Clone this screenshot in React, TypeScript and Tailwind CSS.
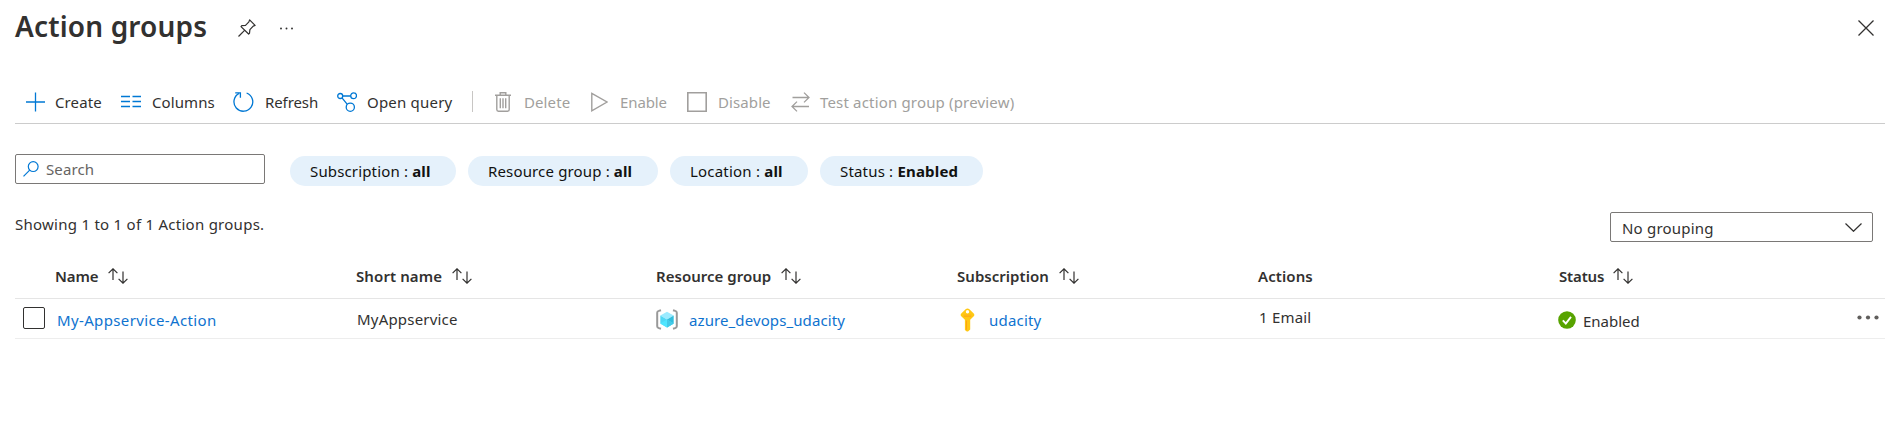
import type { ReactNode } from 'react';

function PinIcon() {
  return (
    <svg width="18" height="18" viewBox="0 0 18 18" fill="none" stroke="#323130" strokeWidth="1.2" strokeLinejoin="round">
      <path d="M11.6 0.9 L17.1 6.4 L15.2 7.1 L11.9 10.6 L11.5 14.2 L10.6 15 L3 7.6 L3.8 6.7 L7.5 6.4 L10.9 2.9 Z" />
      <path d="M6.8 11.2 L0.5 17.5" />
    </svg>
  );
}

function PlusIcon() {
  return (
    <svg width="20" height="20" viewBox="0 0 20 20" fill="none" stroke="#0078d4" strokeWidth="1.3">
      <path d="M9.5 0.5 V19.5 M0 10 H19" />
    </svg>
  );
}

function ColumnsIcon() {
  return (
    <svg width="20" height="20" viewBox="0 0 20 20" fill="none" stroke="#0078d4" strokeWidth="1.3">
      <path d="M0 4.5 H9 M11.5 4.5 H20 M0 9.5 H9 M11.5 9.5 H20 M0 14.5 H9 M11.5 14.5 H20" />
    </svg>
  );
}

function RefreshIcon() {
  return (
    <svg width="21" height="20" viewBox="0 0 21 20" fill="none" stroke="#0078d4" strokeWidth="1.3">
      <path d="M13.6 1 A9.4 9.4 0 1 1 6.2 1.4" />
      <path d="M2.2 0.9 H7.4 V5.8" />
    </svg>
  );
}

function QueryIcon() {
  return (
    <svg width="20" height="20" viewBox="0 0 20 20" fill="none" stroke="#0078d4" strokeWidth="1.3">
      <circle cx="3.2" cy="4" r="2.5" />
      <circle cx="16.6" cy="3.8" r="2.9" />
      <circle cx="13.3" cy="15.2" r="4.1" />
      <path d="M5.7 4 H13.7 M5 5.8 L10.3 12.4" />
    </svg>
  );
}

function TrashIcon() {
  return (
    <svg width="16" height="20" viewBox="0 0 16 20" fill="none" stroke="#a19f9d" strokeWidth="1.4">
      <path d="M0 3.2 H16 M5.2 3 V0.8 H10.8 V3 M1.8 3.4 V17.6 Q1.8 19.3 3.4 19.3 H12.6 Q14.2 19.3 14.2 17.6 V3.4" />
      <path d="M5.3 6.2 V16.2 M8 6.2 V16.2 M10.7 6.2 V16.2" />
    </svg>
  );
}

function PlayIcon() {
  return (
    <svg width="17" height="20" viewBox="0 0 17 20" fill="none" stroke="#a19f9d" strokeWidth="1.4">
      <path d="M0.8 1.4 L16 10 L0.8 18.8 Z" />
    </svg>
  );
}

function SquareIcon() {
  return (
    <svg width="20" height="20" viewBox="0 0 20 20" fill="none" stroke="#a19f9d" strokeWidth="1.6">
      <path d="M0.8 0.8 H19.2 V19.2 H0.8 Z" />
    </svg>
  );
}

function SwapIcon() {
  return (
    <svg width="19" height="20" viewBox="0 0 19 20" fill="none" stroke="#a19f9d" strokeWidth="1.3">
      <path d="M1.5 5.5 H18 M13 0.6 L18 5.5 L13 10.4 M18 14.5 H1 M6 9.6 L1 14.5 L6 19.4" />
    </svg>
  );
}

function SearchIcon() {
  return (
    <svg width="16" height="16" viewBox="0 0 16 16" fill="none" stroke="#0078d4" strokeWidth="1.2">
      <circle cx="10.2" cy="5.6" r="4.9" />
      <path d="M6.7 9.1 L0.5 15.3" />
    </svg>
  );
}

function SortIcon() {
  return (
    <svg width="20" height="16" viewBox="0 0 20 16" fill="none" stroke="#323130" strokeWidth="1.2">
      <path d="M5 12 V1 M0.6 5.2 L5 0.8 L9.4 5.2" />
      <path d="M15 3.5 V15 M10.6 10.8 L15 15.2 L19.4 10.8" />
    </svg>
  );
}

function ResourceGroupIcon() {
  return (
    <svg width="22" height="21" viewBox="0 0 22 21">
      <path d="M5 1.2 L2.8 1.9 Q1.2 2.3 1.2 3.8 V17.2 Q1.2 18.7 2.8 19.1 L5 19.8 M17 1.2 L19.2 1.9 Q20.8 2.3 20.8 3.8 V17.2 Q20.8 18.7 19.2 19.1 L17 19.8" fill="none" stroke="#999999" strokeWidth="2" />
      <path d="M11 2.7 L17.7 6.6 L11 10.4 L4.3 6.6 Z" fill="#9cebff" />
      <path d="M4.3 6.6 L11 10.4 V18.4 L4.3 14.5 Z" fill="#50d8f5" />
      <path d="M17.7 6.6 L11 10.4 V18.4 L17.7 14.5 Z" fill="#32bedd" />
      <path d="M4.3 14.5 L11 10.4 L17.7 14.5 L11 18.4 Z" fill="#50e6ff" />
      <path d="M11 10.4 L17.7 14.5 L11 18.4 Z" fill="#45cae8" />
    </svg>
  );
}

function KeyIcon() {
  return (
    <svg width="15" height="24" viewBox="0 0 15 24">
      <path fillRule="evenodd" d="M7.5 0.5 Q8.6 0.5 9.4 1.3 L13.5 5.2 Q15.2 6.9 13.5 8.6 L10.2 11.8 V21.6 L8 23.6 H6.8 L4.9 21.9 V11.8 L1.5 8.6 Q-0.2 6.9 1.5 5.2 L5.6 1.3 Q6.4 0.5 7.5 0.5 Z M7.5 2 A1.7 1.7 0 1 0 7.5 5.4 A1.7 1.7 0 1 0 7.5 2 Z" fill="#ffc814" />
      <path d="M3.7 6.7 H11.3 V7.4 H3.7 Z M3.7 8.2 H11.3 V8.9 H3.7 Z" fill="#ffa51a" />
      <path d="M6 12.5 H6.9 V22.3 L6 21.4 Z" fill="#ff9f12" />
    </svg>
  );
}

function StatusIcon() {
  return (
    <svg width="18" height="18" viewBox="0 0 18 18">
      <circle cx="9" cy="9" r="8.8" fill="#57a300" />
      <path d="M4.8 9.4 L7.8 12.5 L13 5.8" fill="none" stroke="#fff" strokeWidth="1.9" />
    </svg>
  );
}

type ToolProps = { icon: ReactNode; label: string; className: string };

function Tool({ icon, label, className }: ToolProps) {
  return (
    <button className={`flex shrink-0 items-center whitespace-nowrap text-left ${className}`}>
      {icon}
      <span className="pt-px">{label}</span>
    </button>
  );
}

function Pill({ label, value, className }: { label: string; value: string; className: string }) {
  return (
    <button className={`h-[30px] shrink-0 whitespace-nowrap rounded-full bg-[#e5f1fb] pl-5 pb-px text-left text-[#111] ${className}`}>
      {label} : <b>{value}</b>
    </button>
  );
}

function HeaderCell({ label, sortable = true, className = '' }: { label: string; sortable?: boolean; className?: string }) {
  return (
    <div className={`flex w-[301px] shrink-0 items-center pl-px font-semibold ${className}`}>
      <span className="whitespace-nowrap">{label}</span>
      {sortable && <SortIcon />}
    </div>
  );
}

export default function App() {
  return (
    <div className="h-[443px] w-[1895px] overflow-hidden bg-white pt-2 font-['Noto_Sans','Open_Sans',sans-serif] text-[15px] leading-5 tracking-[0.1px] text-[#323130]">
      <header className="flex h-[72px] items-start pl-[15px] pr-[21px]">
        <h1 className="w-[223px] whitespace-nowrap text-[28px] font-semibold leading-[37px] tracking-[0.15px]">Action groups</h1>
        <div className="mt-[11px]"><PinIcon /></div>
        <svg className="ml-[23px] mt-[19px]" width="16" height="3" viewBox="0 0 16 3" fill="#323130">
          <circle cx="2" cy="1.5" r="0.95" /><circle cx="7.5" cy="1.5" r="0.95" /><circle cx="13" cy="1.5" r="0.95" />
        </svg>
        <svg className="ml-auto mt-3" width="16" height="16" viewBox="0 0 16 16" fill="none" stroke="#323130" strokeWidth="1.3">
          <path d="M0.5 0.5 L15.5 15.5 M15.5 0.5 L0.5 15.5" />
        </svg>
      </header>

      <div className="ml-[15px] mr-[10px] flex h-11 items-center border-b border-[#cccccc] pl-[11px]">
        <Tool icon={<PlusIcon />} label="Create" className="w-[95px] gap-[9px]" />
        <Tool icon={<ColumnsIcon />} label="Columns" className="w-[112px] gap-[11px]" />
        <Tool icon={<RefreshIcon />} label="Refresh" className="w-[104px] gap-[11px] tracking-[-0.1px]" />
        <Tool icon={<QueryIcon />} label="Open query" className="w-[135px] gap-[10px] tracking-[0.2px]" />
        <div className="h-[21px] w-px bg-[#c8c6c4]" />
        <div className="flex items-center pl-[22px] text-[#a19f9d]">
          <Tool icon={<TrashIcon />} label="Delete" className="w-24 gap-[13px]" />
          <Tool icon={<PlayIcon />} label="Enable" className="w-24 gap-3 tracking-[-0.1px]" />
          <Tool icon={<SquareIcon />} label="Disable" className="w-[104px] gap-[11px]" />
          <Tool icon={<SwapIcon />} label="Test action group (preview)" className="gap-[10px] tracking-[0.17px]" />
        </div>
      </div>

      <div className="flex pl-[15px] pt-[30px]">
        <div className="flex h-[30px] w-[250px] items-center gap-[7px] rounded-[2px] border border-[#7a7876] pl-[7px] text-[#666462]">
          <SearchIcon />
          <span>Search</span>
        </div>
        <div className="mt-[2px] flex pl-[25px]">
          <Pill label="Subscription" value="all" className="mr-3 w-[166px] tracking-[0.15px]" />
          <Pill label="Resource group" value="all" className="mr-3 w-[190px] tracking-[0.15px]" />
          <Pill label="Location" value="all" className="mr-3 w-[138px] tracking-[0.2px]" />
          <Pill label="Status" value="Enabled" className="w-[163px] tracking-[0.18px]" />
        </div>
      </div>

      <div className="flex justify-between pl-[15px] pr-[22px] pt-[26px]">
        <p className="mt-[2px] tracking-[0.26px]">Showing 1 to 1 of 1 Action groups.</p>
        <button className="flex h-[30px] w-[263px] items-center justify-between rounded-[2px] border border-[#7a7876] pl-[11px] pr-[10px] pt-px tracking-[0.2px]">
          No grouping
          <svg width="17" height="9" viewBox="0 0 17 9" fill="none" stroke="#323130" strokeWidth="1.2">
            <path d="M0.5 0.5 L8.5 8.3 L16.5 0.5" />
          </svg>
        </button>
      </div>

      <div className="ml-[15px] mr-[10px]">
        <div className="flex h-[57px] border-b border-[#e5e5e5] pl-[39px] pt-[24px]">
          <div className="flex h-5">
            <HeaderCell label="Name" className="gap-[10px] tracking-[-0.1px]" />
            <HeaderCell label="Short name" className="gap-[10px]" />
            <HeaderCell label="Resource group" className="-ml-px gap-[10px] tracking-[0.03px]" />
            <HeaderCell label="Subscription" className="gap-[10px] tracking-[0.03px]" />
            <HeaderCell label="Actions" sortable={false} />
            <HeaderCell label="Status" className="gap-[9px] tracking-[-0.15px]" />
          </div>
        </div>
        <div className="flex h-10 border-b border-[#ededed] pl-2">
          <div className="mt-2 size-[22px] shrink-0 rounded-[2px] border border-[#323130]" />
          <a className="ml-3 mt-[11px] w-[300px] shrink-0 tracking-[0.36px] text-[#0f73cf]">My-Appservice-Action</a>
          <span className="mt-[10px] w-[299px] shrink-0 tracking-[0.2px]">MyAppservice</span>
          <a className="mt-[10px] flex w-[304px] shrink-0 gap-[11px] text-[#0f73cf]"><ResourceGroupIcon /><span className="mt-px tracking-[0.1px]">azure_devops_udacity</span></a>
          <a className="mt-[9px] flex w-[299px] shrink-0 gap-[14px] text-[#0f73cf]"><KeyIcon /><span className="mt-[2px] tracking-[0.2px]">udacity</span></a>
          <span className="mt-[8px] w-[299px] shrink-0 tracking-[0.2px]">1 Email</span>
          <div className="mt-3 flex gap-[7px]"><StatusIcon /><span className="tracking-[0px]">Enabled</span></div>
          <svg className="ml-auto mr-[6px] mt-[16px]" width="22" height="5" viewBox="0 0 22 5" fill="#605e5c">
            <circle cx="2.5" cy="2.5" r="2.1" /><circle cx="11" cy="2.5" r="2.1" /><circle cx="19.5" cy="2.5" r="2.1" />
          </svg>
        </div>
      </div>
    </div>
  );
}
